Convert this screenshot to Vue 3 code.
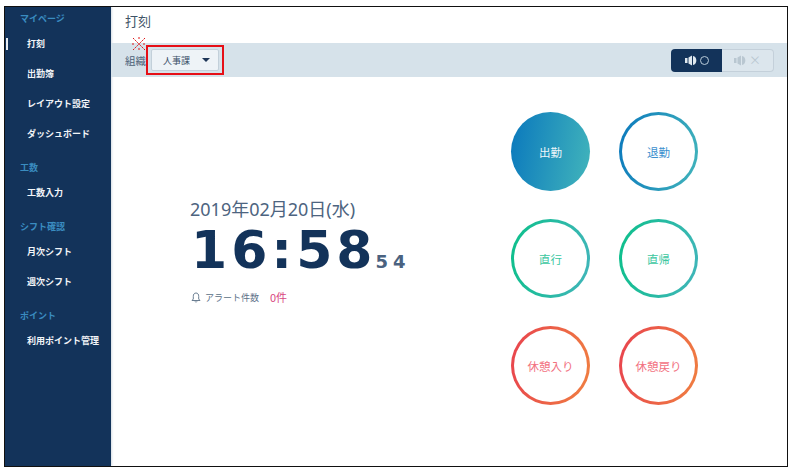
<script setup>
const groups = [
  { label: 'マイページ', items: ['打刻', '出勤簿', 'レイアウト設定', 'ダッシュボード'] },
  { label: '工数', items: ['工数入力'] },
  { label: 'シフト確認', items: ['月次シフト', '週次シフト'] },
  { label: 'ポイント', items: ['利用ポイント管理'] },
]
const buttons = [
  { text: '出勤', cls: 'solid' },
  { text: '退勤', cls: 'blue' },
  { text: '直行', cls: 'green' },
  { text: '直帰', cls: 'green' },
  { text: '休憩入り', cls: 'red' },
  { text: '休憩戻り', cls: 'red' },
]
</script>

<template>
  <div class="page">
    <div class="frame">
      <aside class="side">
        <section v-for="g in groups" :key="g.label" class="group">
          <div class="label">{{ g.label }}</div>
          <div v-for="i in g.items" :key="i" class="item" :class="{ current: i === '打刻' }">{{ i }}</div>
        </section>
      </aside>
      <main class="main">
        <h1 class="title">打刻</h1>
        <div class="bar">
          <span class="org">組織</span>
          <div class="redbox">
            <div class="select"><span>人事課</span><i class="caret"></i></div>
          </div>
          <svg class="mark" width="14" height="14" viewBox="0 0 14 14">
            <path d="M1 1L13 13M13 1L1 13M7 0V3M7 11V14M0 7H3M11 7H14" stroke="#e01414" stroke-width="1" stroke-dasharray="2 1" fill="none" />
          </svg>
          <div class="sound">
            <div class="seg on">
              <svg width="13" height="11" viewBox="0 0 13 11"><path d="M0 3h2.500v5H0zM3.500 2.500L7 .5v10L3.500 8.500zM8 1c4.500.5 4.500 8.500 0 9z" fill="#dfe8ef" /></svg>
              <span class="ring"></span>
            </div>
            <div class="seg off">
              <svg width="13" height="11" viewBox="0 0 13 11"><path d="M0 3h2.500v5H0zM3.500 2.500L7 .5v10L3.500 8.500zM8 1c4.500.5 4.500 8.500 0 9z" fill="#b9c7d1" /></svg>
              <span class="x">×</span>
            </div>
          </div>
        </div>
        <div class="content">
          <div class="clock">
            <div class="date">2019年02月20日(水)</div>
            <div class="time">16:58<span class="sec">54</span></div>
            <div class="alert">
              <svg width="10" height="11" viewBox="0 0 10 11"><path d="M5 1C3 1 2.300 2.500 2.300 4.500V7L1 8.500h8L7.700 7V4.500C7.700 2.500 7 1 5 1zM4 9.500c.3.800 1.700.8 2 0" stroke="#5a6f86" stroke-width=".9" fill="none" /></svg>
              <span class="alert-text">アラート件数</span>
              <span class="count">0件</span>
            </div>
          </div>
          <div class="buttons">
            <div v-for="b in buttons" :key="b.text" class="btn" :class="b.cls">{{ b.text }}</div>
          </div>
        </div>
      </main>
    </div>
  </div>
</template>

<style scoped>
.page {
  width: 793px;
  height: 472px;
  box-sizing: border-box;
  padding: 6px 5px 5px 4px;
  background: #fff;
  font-family: "Noto Sans CJK JP", "Noto Sans", sans-serif;
}
.frame {
  display: flex;
  height: 100%;
  box-sizing: border-box;
  border: 1.500px solid #111;
  overflow: hidden;
}
.side {
  width: 106px;
  flex: none;
  background: #13335a;
  box-shadow: 1px 0 2px #d5dde5;
  padding-top: 2px;
  box-sizing: border-box;
}
.group + .group { margin-top: 9px; }
.label {
  height: 20px;
  line-height: 19px;
  padding-left: 15px;
  font-size: 9px;
  color: #3a8cc0;
  font-weight: 700;
}
.item {
  position: relative;
  height: 30px;
  line-height: 30px;
  padding-left: 22px;
  font-size: 9px;
  font-weight: 700;
  color: #f2f5f8;
}
.current::before {
  content: "";
  position: absolute;
  left: 1px;
  top: 9px;
  width: 2px;
  height: 12px;
  background: #e8edf2;
}
.main { flex: 1; min-width: 0; display: flex; flex-direction: column; }
.title {
  margin: 0;
  height: 36px;
  line-height: 28px;
  padding-left: 14px;
  font-size: 13px;
  font-weight: 400;
  color: #3f5468;
}
.bar {
  position: relative;
  height: 34px;
  flex: none;
  display: flex;
  align-items: center;
  padding: 0 13px 0 14px;
  background: #d6e2ea;
}
.org { font-size: 10.500px; color: #4a6076; width: 21px; }
.redbox {
  width: 78px;
  height: 30px;
  box-sizing: border-box;
  border: 2px solid #e60f17;
  padding: 2px 3px;
}
.select {
  height: 100%;
  box-sizing: border-box;
  display: flex;
  align-items: center;
  justify-content: space-between;
  padding: 0 8px 0 11px;
  background: #eef3f7;
  border: 1px solid #c3d0da;
  border-radius: 2px;
  font-size: 9px;
  color: #3c5068;
}
.caret {
  width: 0;
  height: 0;
  border-left: 4.500px solid transparent;
  border-right: 4.500px solid transparent;
  border-top: 4px solid #1d3557;
}
.mark { position: absolute; left: 21px; top: -6px; }
.sound {
  margin-left: auto;
  display: flex;
  height: 23px;
  width: 103px;
}
.seg { flex: 1; display: flex; align-items: center; justify-content: center; gap: 2px; box-sizing: border-box; }
.on { background: #13335a; border-radius: 4px 0 0 4px; }
.off { border: 1px solid #c4d0da; border-left: 0; border-radius: 0 4px 4px 0; background: #dce6ed; }
.ring { width: 9px; height: 9px; box-sizing: border-box; border: 1px solid #b9cbd9; border-radius: 50%; }
.x { font-size: 12px; line-height: 1; color: #b9c7d1; }
.content {
  flex: 1;
  display: flex;
  justify-content: space-between;
  padding: 35px 89px 0 79px;
}
.clock { padding-top: 86px; }
.date { font-size: 18px; line-height: 22px; color: #4d6480; white-space: nowrap; font-family: "Noto Sans", "Noto Sans CJK JP", sans-serif; }
.time {
  margin-top: 5px;
  margin-left: 1px;
  font-family: "DejaVu Sans", sans-serif;
  font-weight: 700;
  font-size: 52px;
  line-height: 50px;
  letter-spacing: 4px;
  color: #13335a;
  white-space: nowrap;
}
.sec {
  margin-left: -1px;
  font-size: 18px;
  letter-spacing: 5px;
  color: #4a6280;
  font-weight: 700;
}
.alert { display: flex; align-items: center; margin-top: 2px; margin-left: 1px; height: 16px; }
.alert-text { margin-left: 4px; font-size: 9px; color: #5a6f86; }
.count { margin-left: 11px; font-size: 11px; color: #d9487f; }
.buttons {
  display: grid;
  grid-template-columns: 79px 79px;
  grid-auto-rows: 79px;
  column-gap: 29px;
  row-gap: 28px;
}
.btn {
  box-sizing: border-box;
  border-radius: 50%;
  border: 3px solid transparent;
  display: flex;
  align-items: center;
  justify-content: center;
  font-size: 11.500px;
  white-space: nowrap;
}
.solid {
  border: 0;
  color: #eef6fa;
  background: linear-gradient(100deg, #0a78bd, #42b5bb);
}
.blue {
  color: #3c8fce;
  background: linear-gradient(#fff, #fff) padding-box, linear-gradient(100deg, #0a78bd, #42b5bb) border-box;
}
.green {
  color: #3cc79f;
  background: linear-gradient(#fff, #fff) padding-box, linear-gradient(100deg, #0cc08a, #42b5bb) border-box;
}
.red {
  color: #f2717f;
  background: linear-gradient(#fff, #fff) padding-box, linear-gradient(100deg, #e8424e, #f08040) border-box;
}
</style>
